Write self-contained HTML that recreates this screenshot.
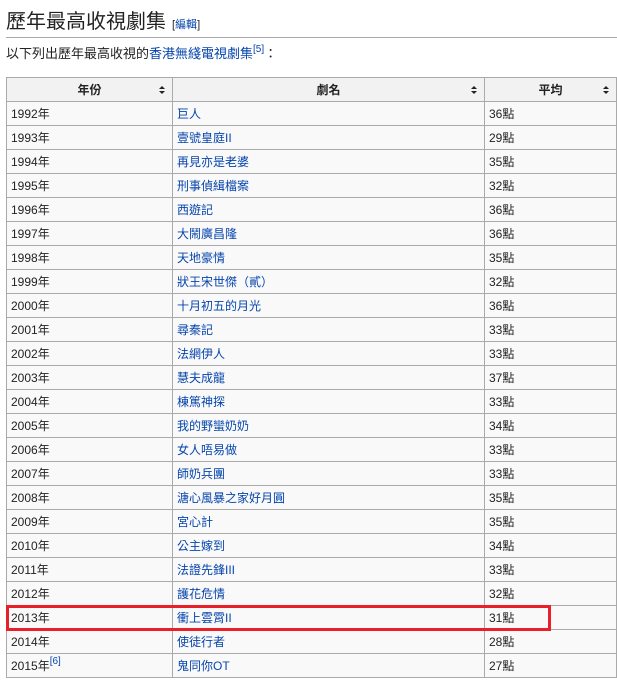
<!DOCTYPE html>
<html><head><meta charset="utf-8"><style>
body{margin:0;background:#fff;font-family:"Liberation Sans","Noto Sans CJK TC",sans-serif;font-size:12px;color:#222;width:617px;height:682px;overflow:hidden;position:relative}
h2{position:absolute;left:6px;top:8px;margin:0;width:611px;font-weight:normal;font-size:20px;color:#222;border-bottom:1px solid #aaa;height:29px;line-height:28px;font-family:"Liberation Sans","Noto Sans CJK TC",sans-serif}
h2 small{font-size:11px;margin-left:6px}
a{color:#0645ad;text-decoration:none}
p{position:absolute;left:6px;top:44px;margin:0;line-height:20px;font-size:13px}
sup{font-size:10px;vertical-align:6px;line-height:0}
table{position:absolute;left:6px;top:77px;border-collapse:collapse;background:#f9f9f9;width:611px}
td,th{border:1px solid #aaa;height:23px;padding:0 4px;text-align:left}
th{background:#f2f2f2;font-weight:bold;text-align:center;position:relative;height:23px}
th::after{content:"";position:absolute;right:7px;top:8px;width:0;height:0;border-left:3px solid transparent;border-right:3px solid transparent;border-bottom:3px solid #222;}
th::before{content:"";position:absolute;right:7px;top:13px;width:0;height:0;border-left:3px solid transparent;border-right:3px solid transparent;border-top:3px solid #222;}
.box{position:absolute;left:6px;top:605px;width:539px;height:20px;border:3px solid #e8202a}
</style></head><body>
<h2>歷年最高收視劇集<small>[<a>編輯</a>]</small></h2>
<p>以下列出歷年最高收視的<a>香港無綫電視劇集</a><sup><a>[5]</a></sup>：</p>
<table>
<tr><th style="width:157px">年份</th><th style="width:303px">劇名</th><th>平均</th></tr>
<tr><td>1992年</td><td><a>巨人</a></td><td>36點</td></tr>
<tr><td>1993年</td><td><a>壹號皇庭II</a></td><td>29點</td></tr>
<tr><td>1994年</td><td><a>再見亦是老婆</a></td><td>35點</td></tr>
<tr><td>1995年</td><td><a>刑事偵緝檔案</a></td><td>32點</td></tr>
<tr><td>1996年</td><td><a>西遊記</a></td><td>36點</td></tr>
<tr><td>1997年</td><td><a>大鬧廣昌隆</a></td><td>36點</td></tr>
<tr><td>1998年</td><td><a>天地豪情</a></td><td>35點</td></tr>
<tr><td>1999年</td><td><a>狀王宋世傑（貳）</a></td><td>32點</td></tr>
<tr><td>2000年</td><td><a>十月初五的月光</a></td><td>36點</td></tr>
<tr><td>2001年</td><td><a>尋秦記</a></td><td>33點</td></tr>
<tr><td>2002年</td><td><a>法網伊人</a></td><td>33點</td></tr>
<tr><td>2003年</td><td><a>慧夫成龍</a></td><td>37點</td></tr>
<tr><td>2004年</td><td><a>棟篤神探</a></td><td>33點</td></tr>
<tr><td>2005年</td><td><a>我的野蠻奶奶</a></td><td>34點</td></tr>
<tr><td>2006年</td><td><a>女人唔易做</a></td><td>33點</td></tr>
<tr><td>2007年</td><td><a>師奶兵團</a></td><td>33點</td></tr>
<tr><td>2008年</td><td><a>溏心風暴之家好月圓</a></td><td>35點</td></tr>
<tr><td>2009年</td><td><a>宮心計</a></td><td>35點</td></tr>
<tr><td>2010年</td><td><a>公主嫁到</a></td><td>34點</td></tr>
<tr><td>2011年</td><td><a>法證先鋒III</a></td><td>33點</td></tr>
<tr><td>2012年</td><td><a>護花危情</a></td><td>32點</td></tr>
<tr><td>2013年</td><td><a>衝上雲霄II</a></td><td>31點</td></tr>
<tr><td>2014年</td><td><a>使徒行者</a></td><td>28點</td></tr>
<tr><td>2015年<sup><a>[6]</a></sup></td><td><a>鬼同你OT</a></td><td>27點</td></tr>
</table>
<div class="box"></div>
</body></html>
